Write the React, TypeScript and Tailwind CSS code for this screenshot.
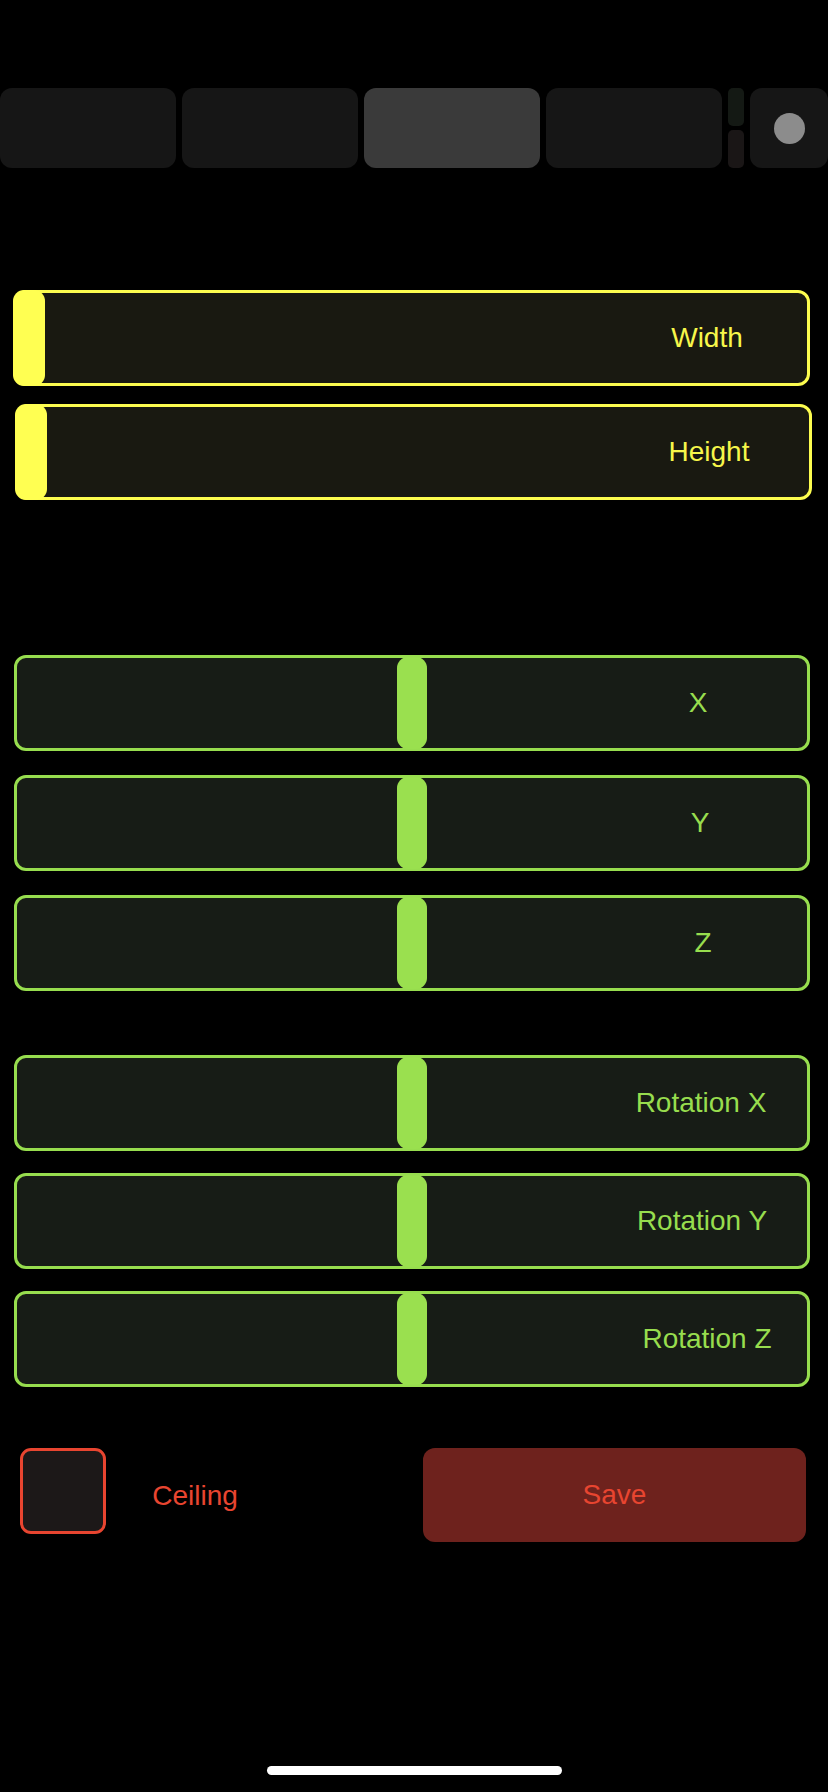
import { FC } from "react"

interface SliderProps {
    label: string
    tone: "yellow" | "green"
    thumb: "start" | "center"
    className?: string
    labelClassName?: string
}

const Slider: FC<SliderProps> = ({ label, tone, thumb, className, labelClassName }) => {
    const yellow = tone === "yellow"
    return (
        <div
            className={`relative flex h-[96px] items-center justify-end rounded-[12px] border-[3px] ${
                yellow ? "border-[#fcfc4f] bg-[#191911]" : "border-[#97dd4e] bg-[#171c16]"
            } ${className ?? ""}`}
        >
            {thumb === "start" ? (
                <div className="absolute -top-[3px] -bottom-[3px] -left-[4px] w-[32px] rounded-[11px] bg-[#ffff52]" />
            ) : (
                <div className="absolute -top-[1px] -bottom-[1px] left-1/2 w-[30px] -translate-x-1/2 rounded-[11px] bg-[#9ae04f]" />
            )}
            <div
                className={`w-[200px] text-center text-[28px] leading-none ${
                    yellow ? "text-[#f6f64a]" : "text-[#97dd4e]"
                } ${labelClassName ?? ""}`}
            >
                {label}
            </div>
        </div>
    )
}

const Tab: FC<{ active?: boolean }> = ({ active }) => (
    <div className={`h-[80px] w-[176px] rounded-[12px] ${active ? "bg-[#3a3a3a]" : "bg-[#161616]"}`} />
)

export default function App() {
    return (
        <div
            className="flex h-[1792px] w-[828px] flex-col bg-black"
            style={{ fontFamily: '"Liberation Sans", Arial, sans-serif' }}
        >
            {/* top tab strip */}
            <div className="mt-[88px] flex h-[80px] gap-[6px]">
                <Tab />
                <Tab />
                <Tab active />
                <Tab />
                <div className="flex w-[16px] flex-col gap-[4px]">
                    <div className="flex-1 rounded-[5px] bg-[#141914]" />
                    <div className="flex-1 rounded-[5px] bg-[#1a1616]" />
                </div>
                <div className="flex flex-1 items-center justify-center rounded-[12px] bg-[#161616]">
                    <div className="h-[31px] w-[31px] rounded-full bg-[#8c8c8c]" />
                </div>
            </div>

            {/* size */}
            <div className="mt-[122px] flex flex-col">
                <Slider label="Width" tone="yellow" thumb="start" className="ml-[14px] w-[796px]" />
                <Slider label="Height" tone="yellow" thumb="start" className="ml-[16px] mt-[18px] w-[796px]" />
            </div>

            {/* position */}
            <div className="mt-[155px] flex flex-col gap-[24px] pl-[14px] pr-[18px]">
                <Slider label="X" tone="green" thumb="center" labelClassName="mr-[9px]" />
                <Slider label="Y" tone="green" thumb="center" labelClassName="mr-[7px]" />
                <Slider label="Z" tone="green" thumb="center" labelClassName="mr-[4px]" />
            </div>

            {/* rotation */}
            <div className="mt-[64px] flex flex-col gap-[22px] pl-[14px] pr-[18px]">
                <Slider label="Rotation X" tone="green" thumb="center" labelClassName="mr-[6px]" />
                <Slider label="Rotation Y" tone="green" thumb="center" labelClassName="mr-[5px]" />
                <Slider label="Rotation Z" tone="green" thumb="center" />
            </div>

            {/* ceiling + save */}
            <div className="mt-[61px] flex items-start pl-[20px]">
                <div className="h-[86px] w-[86px] rounded-[11px] border-[3px] border-[#e84530] bg-[#1c1818]" />
                <div className="mt-[5px] flex h-[86px] w-[178px] items-center justify-center text-[28px] text-[#e84530]">
                    Ceiling
                </div>
                <button className="ml-[139px] flex h-[94px] w-[383px] items-center justify-center rounded-[12px] bg-[#6e221d] text-[28px] text-[#e84530]">
                    Save
                </button>
            </div>

            <div className="mt-auto mb-[17px] ml-[267px] h-[9px] w-[295px] rounded-full bg-white" />
        </div>
    )
}
